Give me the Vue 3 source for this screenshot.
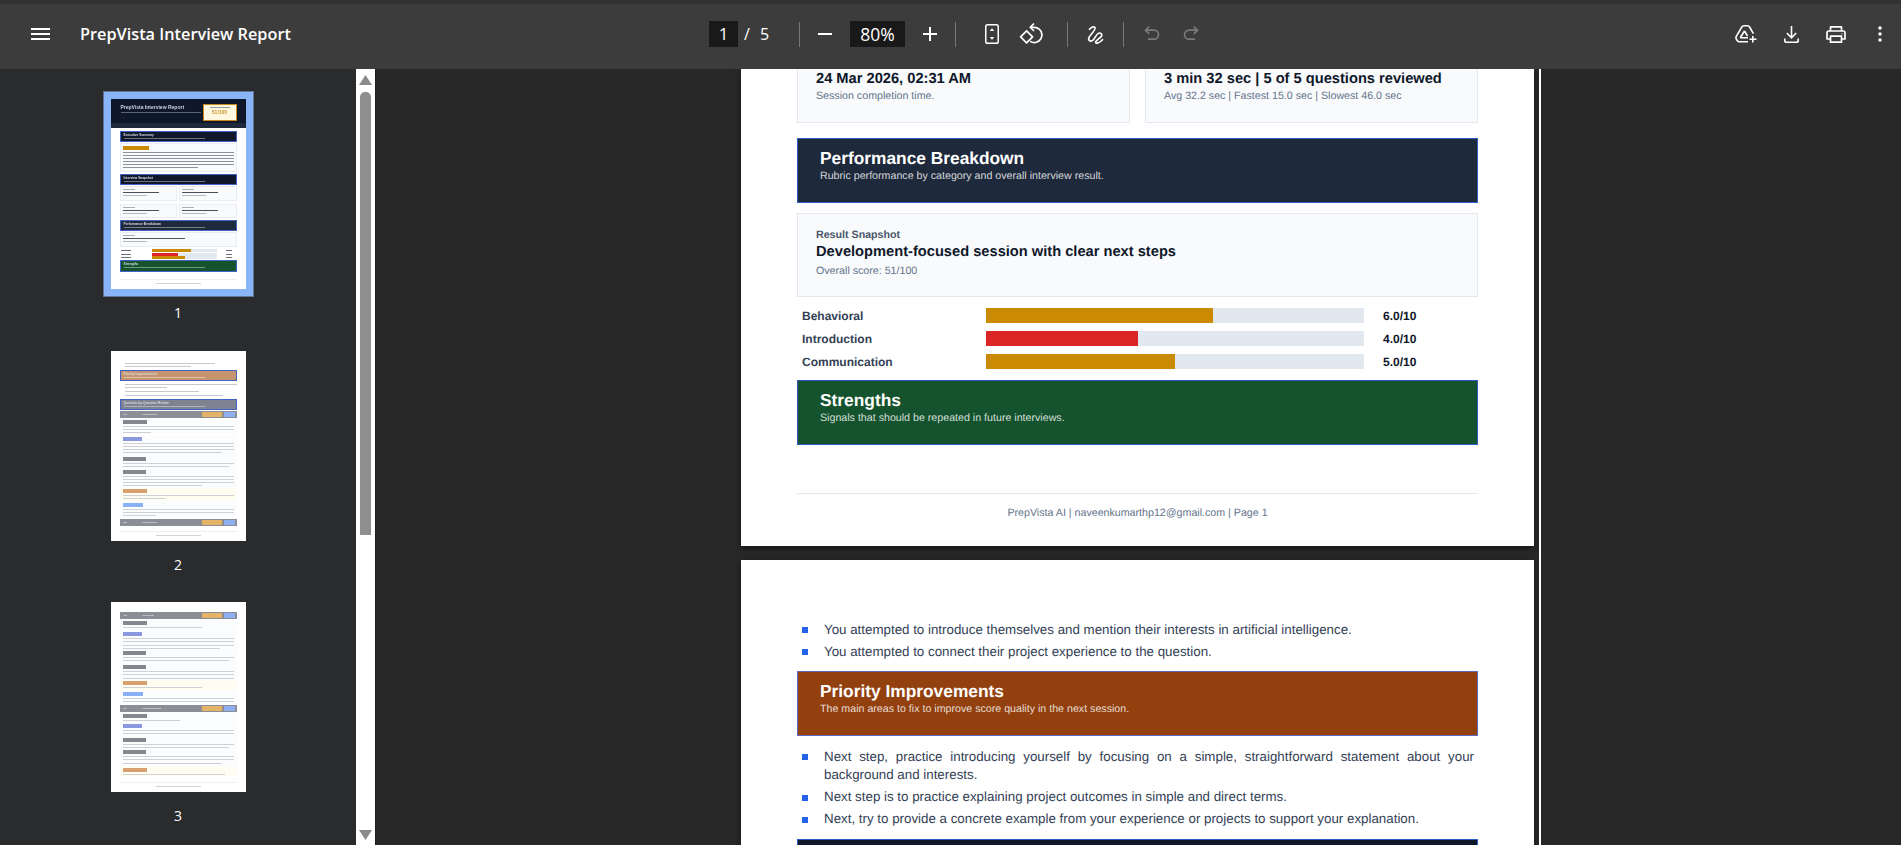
<script setup>
const bars = [
  { label: 'Behavioral', value: '6.0/10', pct: 60, color: '#ca8a04' },
  { label: 'Introduction', value: '4.0/10', pct: 40.2, color: '#dc2626' },
  { label: 'Communication', value: '5.0/10', pct: 50, color: '#ca8a04' },
]

// Thumbnail items are described by their top (y) and height in thumbnail pixels.
// Flow margins are derived from them so the miniature stays a normal stacked layout.
function flow(items) {
  let bottom = 0
  return items.map((it) => {
    const out = { ...it, mt: it.y - bottom }
    bottom = it.y + it.h
    return out
  })
}
const line = (y, w = 100, x = 9) => ({ kind: 'line', y, h: 1, w, x })
const banner = (y, h, text, bg, sub) => ({ kind: 'banner', y, h, text, bg, sub })
const qhead = (y, n, text) => ({ kind: 'qhead', y, h: 7, n, text })
const block = (y, h, tag, tagW, lines, bg = '#fbfcfe') => ({ kind: 'block', y, h, tag, tagW, lines, bg })
const GRAY = '#85878f', BLUE = '#8a98e0', SKY = '#8ab0f8', ORANGE = '#d8a070', CREAM = '#fffcf2'

const thumbs = [
  {
    n: 1,
    selected: true,
    items: flow([
      { kind: 'hero', y: 0, h: 29 },
      banner(32, 11, 'Executive Summary', '#0f172a', true),
      { kind: 'summary', y: 44, h: 29 },
      banner(75, 11, 'Interview Snapshot', '#0f172a', true),
      { kind: 'cards', y: 87, h: 15 },
      { kind: 'cards', y: 105, h: 14 },
      banner(121, 11, 'Performance Breakdown', '#1e293b', true),
      { kind: 'result', y: 133, h: 15 },
      { kind: 'mbar', y: 150, h: 3, c: '#ca8a04', w: 61 },
      { kind: 'mbar', y: 153.5, h: 3, c: '#dc2626', w: 41 },
      { kind: 'mbar', y: 157, h: 3, c: '#ca8a04', w: 51 },
      banner(161, 12, 'Strengths', '#14532d', true),
      { kind: 'foot', y: 180, h: 6 },
    ]),
  },
  {
    n: 2,
    items: flow([
      line(12, 90, 14), line(15, 66, 14),
      banner(19, 11, 'Priority Improvements', '#c6946f', true),
      line(33, 112, 14), line(36, 42, 14), line(40, 74, 14), line(44, 98, 14),
      banner(48, 11, 'Question-by-Question Review', '#7f8290', true),
      qhead(60, 'Q1', 'Introduction'),
      block(68, 15, GRAY, 24, [100, 100, 26]),
      block(85, 20, BLUE, 19, [100, 100, 100, 90]),
      block(105, 12, GRAY, 23, [100, 96]),
      block(118, 19, GRAY, 23, [100, 100, 100, 72]),
      block(137, 13, ORANGE, 24, [100, 38], CREAM),
      block(151, 16, SKY, 20, [100, 100, 30]),
      qhead(168, 'Q2', 'Introduction'),
      { kind: 'foot', y: 180, h: 6 },
    ]),
  },
  {
    n: 3,
    items: flow([
      qhead(10, 'Q3', 'Technical'),
      block(18, 10, GRAY, 24, [72]),
      block(29, 19, BLUE, 19, [100, 100, 100, 88]),
      block(48, 14, GRAY, 23, [100, 96]),
      block(62, 16, GRAY, 23, [100, 100, 100]),
      block(78, 10, ORANGE, 24, [72], CREAM),
      block(89, 13, SKY, 20, [100, 100]),
      qhead(103, 'Q4', 'Communication'),
      block(111, 9, GRAY, 24, [52]),
      block(121, 14, BLUE, 19, [100, 100]),
      block(135, 12, GRAY, 23, [100, 96]),
      block(147, 18, GRAY, 23, [100, 100, 90]),
      block(165, 9, ORANGE, 24, [92], CREAM),
      { kind: 'foot', y: 180, h: 6 },
    ]),
  },
]
</script>

<template>
  <div class="app">
    <header class="toolbar">
      <div class="tb-left">
        <svg class="ic menu" viewBox="0 0 19 12"><path d="M0 0h19v2H0zM0 5h19v2H0zM0 10h19v2H0z" fill="#fff" /></svg>
        <span class="doc-title">PrepVista Interview Report</span>
      </div>
      <div class="tb-center">
        <span class="page-box">1</span>
        <span class="slash">/</span>
        <span class="page-total">5</span>
        <i class="sep first" />
        <svg class="ic zoom-minus" viewBox="0 0 14 2"><path d="M0 0h14v2H0z" fill="#fff" /></svg>
        <span class="zoom-box">80%</span>
        <svg class="ic zoom-plus" viewBox="0 0 14 14"><path d="M6 0h2v6h6v2H8v6H6V8H0V6h6z" fill="#fff" /></svg>
        <i class="sep second" />
        <svg class="ic fit" viewBox="0 0 14 20" fill="none">
          <rect x=".75" y=".75" width="12.5" height="18.5" rx="1.8" stroke="#fff" stroke-width="1.5" />
          <path d="M7 4.2 9.3 7H4.7zM7 15.8 4.7 13h4.6z" fill="#fff" />
        </svg>
        <svg class="ic rotate" viewBox="0 0 24 24" fill="none" stroke="#fff" stroke-width="1.7">
          <path d="M7.6 8.8 13.6 14.8 7.6 20.8 1.6 14.8z" stroke-linejoin="round" />
          <path d="M11.8 5.3h3.4a7.6 7.6 0 0 1 2.2 14.9 7.4 7.4 0 0 1-6.2-.8" />
          <path d="M15 1.5 11.3 5.3 15 9" />
        </svg>
        <i class="sep third" />
        <svg class="ic draw" viewBox="0 0 20 22" fill="none" stroke="#fff" stroke-width="1.900" stroke-linecap="round" stroke-linejoin="round">
          <path d="M2.500 5C4 3 7 1.500 8.500 2.500c1.500 1.200-.5 4-2.500 6.500C4 11.500 1 14 1.500 16.500c.5 2.800 3.500 2.700 5.500.5 2-2.300 3.500-6.500 6-7.500 2-.8 4.500.8 3.500 3-1 2.300-7 5.500-7 7.500 0 2 4.500 1 8-3" />
        </svg>
        <i class="sep fourth" />
        <svg class="ic undo" viewBox="0 0 16 18" fill="none" stroke="#7a7a7a" stroke-width="1.7">
          <path d="M5.200 1.500 1.500 5.200 5.200 8.900" />
          <path d="M1.500 5.200H10a4.500 4.500 0 0 1 0 9H4" />
        </svg>
        <svg class="ic redo" viewBox="0 0 16 18" fill="none" stroke="#7a7a7a" stroke-width="1.7">
          <path d="M10.800 1.500 14.500 5.200 10.800 8.900" />
          <path d="M14.500 5.200H6a4.500 4.500 0 0 0 0 9H12" />
        </svg>
      </div>
      <div class="tb-right">
        <svg class="ic drive" viewBox="0 0 22 18" fill="none" stroke="#fff" stroke-width="1.6" stroke-linejoin="round">
          <path d="M13 16.800H4.600c-1 0-1.800-.4-2.400-1.300L1.300 14c-.5-.9-.5-1.700 0-2.600L6.800 2c.5-.8 1.200-1.200 2.200-1.200h3.400c1 0 1.700.4 2.200 1.200l3.800 6.600" />
          <path d="M5.200 12.800h7.800M9.500 6 5.200 12.800M9.500 6l3 5" />
          <path d="M17.800 11v6.500M14.500 14.300h7" />
        </svg>
        <svg class="ic download" viewBox="0 0 15 17" fill="none" stroke="#fff" stroke-width="1.6">
          <path d="M7.500 0v11.500M2.800 7l4.700 4.800L12.200 7" />
          <path d="M.8 12.500v1.900c0 1 .7 1.800 1.700 1.800h10c1 0 1.700-.8 1.700-1.800v-1.900" />
        </svg>
        <svg class="ic print" viewBox="0 0 20 17" fill="none" stroke="#fff" stroke-width="1.7" stroke-linejoin="round">
          <path d="M4.500 5V.9h11V5" />
          <path d="M4.500 13H1V7c0-1.100.9-2 2-2h14c1.100 0 2 .9 2 2v6h-3.500" />
          <path d="M4.500 10.200h11v6h-11z" />
          <circle cx="16" cy="7.800" r=".6" fill="#fff" stroke="none" />
        </svg>
        <svg class="ic more" viewBox="0 0 4 16"><g fill="#fff"><circle cx="2" cy="2" r="1.700" /><circle cx="2" cy="8" r="1.700" /><circle cx="2" cy="14" r="1.700" /></g></svg>
      </div>
    </header>

    <div class="body">
      <aside class="sidebar">
        <div v-for="t in thumbs" :key="t.n" class="thumb-item">
          <div class="thumb" :class="{ selected: t.selected }">
            <div class="thumb-inner">
              <template v-for="(it, i) in t.items" :key="i">
                <div v-if="it.kind === 'hero'" class="m-hero" :style="{ marginTop: it.mt + 'px', height: it.h + 'px' }">
                  <div class="m-hero-main">
                    <div class="m-hero-text">
                      <b>PrepVista Interview Report</b>
                      <i class="m-hero-sub" />
                    </div>
                    <div class="m-score"><i />51/100</div>
                  </div>
                </div>
                <div v-else-if="it.kind === 'banner'" class="m-banner" :style="{ marginTop: it.mt + 'px', height: it.h + 'px', background: it.bg }">
                  <span>{{ it.text }}</span><i v-if="it.sub" />
                </div>
                <div v-else-if="it.kind === 'line'" class="m-line" :style="{ marginTop: it.mt + 'px', marginLeft: it.x + 'px', width: it.w + 'px' }" />
                <div v-else-if="it.kind === 'qhead'" class="m-qhead" :style="{ marginTop: it.mt + 'px' }">
                  <span class="q-n">{{ it.n }}</span><span class="q-t">{{ it.text }}</span>
                  <i class="pill gold" /><i class="pill sky" />
                </div>
                <div v-else-if="it.kind === 'block'" class="m-block" :style="{ marginTop: it.mt + 'px', height: it.h + 'px', background: it.bg }">
                  <i class="m-tag" :style="{ width: it.tagW + 'px', background: it.tag }" />
                  <i v-for="(w, j) in it.lines" :key="j" class="m-bl" :style="{ width: w + '%' }" />
                </div>
                <div v-else-if="it.kind === 'summary'" class="m-summary" :style="{ marginTop: it.mt + 'px', height: it.h + 'px' }">
                  <i class="m-tag orange" />
                  <i v-for="j in 6" :key="j" class="m-dl" :class="{ short: j === 6 }" />
                </div>
                <div v-else-if="it.kind === 'cards'" class="m-cards" :style="{ marginTop: it.mt + 'px', height: it.h + 'px' }">
                  <div v-for="j in 2" :key="j" class="m-card"><i class="s1" /><i class="s2" /><i class="s3" /></div>
                </div>
                <div v-else-if="it.kind === 'result'" class="m-result" :style="{ marginTop: it.mt + 'px', height: it.h + 'px' }"><i class="s1" /><i class="s2" /><i class="s3" /></div>
                <div v-else-if="it.kind === 'mbar'" class="m-barrow" :style="{ marginTop: it.mt + 'px', height: it.h + 'px' }">
                  <i class="ml" /><div class="mt"><div :style="{ width: it.w + '%', background: it.c }" /></div><i class="mv" />
                </div>
                <div v-else-if="it.kind === 'foot'" class="m-foot" :style="{ marginTop: it.mt + 'px' }"><i /></div>
              </template>
            </div>
          </div>
          <div class="thumb-num">{{ t.n }}</div>
        </div>
      </aside>

      <div class="scrollbar">
        <svg class="arrow" viewBox="0 0 13 10"><path d="M6.500 0 13 10H0z" fill="#8a8a8a" /></svg>
        <div class="sb-thumb" />
        <svg class="arrow down" viewBox="0 0 13 10"><path d="M0 0h13L6.500 10z" fill="#8a8a8a" /></svg>
      </div>

      <main class="viewer">
        <div class="pages">
          <section class="page page-one">
            <div class="cards">
              <div class="card">
                <div class="card-title">24 Mar 2026, 02:31 AM</div>
                <div class="card-sub">Session completion time.</div>
              </div>
              <div class="card">
                <div class="card-title">3 min 32 sec | 5 of 5 questions reviewed</div>
                <div class="card-sub">Avg 32.2 sec | Fastest 15.0 sec | Slowest 46.0 sec</div>
              </div>
            </div>

            <div class="banner navy">
              <h2>Performance Breakdown</h2>
              <p>Rubric performance by category and overall interview result.</p>
            </div>

            <div class="snapshot">
              <div class="snap-label">Result Snapshot</div>
              <div class="snap-title">Development-focused session with clear next steps</div>
              <div class="snap-sub">Overall score: 51/100</div>
            </div>

            <div class="bars">
              <div v-for="b in bars" :key="b.label" class="bar-row">
                <span class="bar-label">{{ b.label }}</span>
                <div class="bar-track"><div class="bar-fill" :style="{ width: b.pct + '%', background: b.color }" /></div>
                <span class="bar-value">{{ b.value }}</span>
              </div>
            </div>

            <div class="banner green">
              <h2>Strengths</h2>
              <p>Signals that should be repeated in future interviews.</p>
            </div>

            <footer class="page-foot">PrepVista AI | naveenkumarthp12@gmail.com | Page 1</footer>
          </section>

          <section class="page page-two">
            <ul class="list">
              <li><span>You attempted to introduce themselves and mention their interests in artificial intelligence.</span></li>
              <li><span>You attempted to connect their project experience to the question.</span></li>
            </ul>
            <div class="banner brown">
              <h2>Priority Improvements</h2>
              <p>The main areas to fix to improve score quality in the next session.</p>
            </div>
            <ul class="list after">
              <li><span>Next step, practice introducing yourself by focusing on a simple, straightforward statement about your background and interests.</span></li>
              <li><span>Next step is to practice explaining project outcomes in simple and direct terms.</span></li>
              <li><span>Next, try to provide a concrete example from your experience or projects to support your explanation.</span></li>
            </ul>
            <div class="banner dark" />
          </section>
        </div>
      </main>
    </div>
  </div>
</template>

<style>
html, body { margin: 0; background: #282828; overflow: hidden; }
</style>

<style scoped>
.app { width: 1901px; height: 845px; display: flex; flex-direction: column; overflow: hidden; background: #282828; }
.ic { display: block; flex: none; }

/* toolbar */
.toolbar { height: 69px; box-sizing: border-box; padding-bottom: 5px; flex: none; display: flex; align-items: center; background: #3c3c3c; border-top: 4px solid #323232; color: #fff; font-family: "Open Sans", "Noto Sans", sans-serif; position: relative; z-index: 2; }
.tb-left { display: flex; align-items: center; width: 709px; flex: none; padding-left: 31px; box-sizing: border-box; }
.menu { width: 19px; height: 12px; }
.doc-title { margin-left: 30px; font-size: 16.300px; font-weight: 600; white-space: nowrap; }
.tb-center { display: flex; align-items: center; flex: none; font-size: 16px; }
.page-box { width: 29px; height: 26px; line-height: 26px; background: #191919; text-align: center; font-size: 17px; }
.slash { width: 8px; margin-left: 5px; text-align: center; }
.page-total { width: 8px; margin-left: 9px; text-align: center; }
.sep { display: block; width: 1px; height: 25px; background: #777; flex: none; }
.sep.first { margin-left: 31px; }
.zoom-minus { width: 14px; height: 2px; margin-left: 18px; }
.zoom-box { width: 55px; height: 26px; line-height: 26px; margin-left: 18px; background: #191919; text-align: center; font-size: 17.500px; }
.zoom-plus { width: 14px; height: 14px; margin-left: 18px; }
.sep.second { margin-left: 18px; }
.fit { width: 14px; height: 20px; margin-left: 29px; }
.rotate { width: 24px; height: 24px; margin-left: 20px; }
.sep.third { margin-left: 24px; }
.draw { width: 18px; height: 19px; margin-left: 19px; }
.sep.fourth { margin-left: 18px; }
.undo { width: 16px; height: 18px; margin-left: 20px; }
.redo { width: 16px; height: 18px; margin-left: 23px; }
.tb-right { margin-left: auto; display: flex; align-items: center; padding-right: 19px; }
.drive { width: 22px; height: 18px; }
.download { width: 15px; height: 17px; margin-left: 27px; }
.print { width: 20px; height: 17px; margin-left: 27px; }
.more { width: 4px; height: 16px; margin-left: 32px; }

/* body */
.body { flex: 1; min-height: 0; display: flex; }
.sidebar { width: 356px; flex: none; background: #2a2b2c; display: flex; flex-direction: column; align-items: center; padding-top: 30px; overflow: hidden; box-sizing: border-box; font-family: "Liberation Sans", sans-serif; }
.thumb-item { height: 251.500px; flex: none; display: flex; flex-direction: column; align-items: center; }
.thumb { width: 135px; height: 190px; flex: none; background: #fff; overflow: hidden; }
.thumb-inner { height: 190px; display: flow-root; filter: blur(.45px); }
.thumb.selected { box-shadow: 0 0 0 7px #8ab4f8, 0 0 0 8px #5f7396; }
.thumb-num { margin-top: 14px; font: 14px/20px "Open Sans", sans-serif; color: #fff; }

/* miniatures */
.m-hero { background: #1e293b; display: flow-root; }
.m-hero-main { height: 24px; background: #0f172a; display: flex; justify-content: space-between; align-items: flex-start; padding: 5px 9px 0 10px; box-sizing: border-box; }
.m-hero-text b { display: block; font-size: 5px; line-height: 6px; color: #cbd2dc; white-space: nowrap; }
.m-hero-sub { display: block; width: 80px; height: 1px; margin-top: 2px; background: #5a6577; }
.m-score { width: 34px; height: 17px; box-sizing: border-box; border: 1px solid #c9891a; background: #fff8e1; text-align: center; color: #c9952a; font-size: 5px; font-weight: 700; line-height: 6px; }
.m-score i { display: block; width: 20px; height: 1px; margin: 2px auto 1px; background: #999; }
.m-banner { margin-left: 9px; margin-right: 9px; box-sizing: border-box; border: 1px solid #4263c4; padding: 1px 3px; overflow: hidden; color: #d8dce3; }
.m-banner span { display: block; font-size: 3.200px; line-height: 4px; font-weight: 700; white-space: nowrap; }
.m-banner i { display: block; width: 75%; height: 1px; margin-top: 1px; background: rgba(255, 255, 255, .4); }
.m-line { height: 1px; background: #c8c9cc; }
.m-qhead { height: 7px; margin-left: 9px; margin-right: 9px; display: flex; align-items: center; background: #8b8d97; color: #e6e6ea; font-size: 2.500px; font-weight: 700; }
.q-n { margin-left: 4px; width: 16px; }
.q-t { flex: 1; margin-left: 3px; }
.pill { display: block; height: 5px; }
.pill.gold { width: 20px; background: #e3b368; }
.pill.sky { width: 11px; margin: 0 2px; background: #8fb0f0; }
.m-block { margin-left: 9px; margin-right: 9px; padding: 1px 3px 0; box-sizing: border-box; overflow: hidden; }
.m-tag { display: block; height: 4px; }
.m-tag.orange { width: 26px; background: #ca8a04; }
.m-bl { display: block; height: 1px; margin-top: 2.200px; background: #cfd0d3; }
.m-summary { margin-left: 9px; margin-right: 9px; padding: 2px 2px 0; box-sizing: border-box; background: #f8fafc; border: 1px solid #e8edf3; }
.m-dl { display: block; height: 1px; margin-top: 2px; background: #8c909a; }
.m-tag.orange + .m-dl { margin-top: 1.500px; }
.m-dl.short { width: 68%; }
.m-cards { margin-left: 9px; margin-right: 9px; display: flex; gap: 2px; }
.m-card, .m-result { flex: 1; box-sizing: border-box; background: #f8fafc; border: 1px solid #e8edf3; padding: 2px 2px 0; }
.m-result { margin-left: 9px; margin-right: 9px; }
.s1, .s2, .s3 { display: block; height: 1px; }
.s1 { width: 12px; background: #a8adb6; }
.s2 { width: 36px; margin-top: 2px; background: #4a4f59; }
.s3 { width: 24px; margin-top: 2px; background: #b6bac2; }
.m-result .s2 { width: 62px; }
.m-barrow { margin-left: 9px; margin-right: 9px; display: flex; align-items: center; }
.ml { display: block; width: 10px; height: 1px; margin-left: 1px; background: #6a6f7a; }
.mt { width: 65px; height: 3px; margin-left: 21px; background: #e2e8f0; }
.mt div { height: 3px; }
.mv { display: block; width: 6px; height: 1px; margin-left: 9px; background: #6a6f7a; }
.m-foot { height: 6px; margin-left: 9px; margin-right: 9px; border-top: 1px solid #eef0f4; box-sizing: border-box; }
.m-foot i { display: block; width: 45px; height: 1px; margin: 3px auto 0; background: #d0d2d6; }

/* fake scrollbar */
.scrollbar { width: 19px; flex: none; background: #fff; border-right: 1px solid #1f1f1f; display: flex; flex-direction: column; align-items: center; padding-top: 6px; box-sizing: content-box; }
.arrow { width: 13px; height: 10px; flex: none; }
.sb-thumb { width: 11px; height: 443px; margin-top: 7px; border-radius: 5px 5px 0 0; background: #8f8f8f; }
.arrow.down { margin-top: auto; margin-bottom: 5px; }

/* viewer */
.viewer { flex: 1; min-width: 0; display: flex; justify-content: center; padding-right: 2px; overflow: hidden; background: #282828; font-family: "Liberation Sans", Arial, sans-serif; text-rendering: geometricPrecision; }
.pages { width: 793px; position: relative; }
.pages::after { content: ""; position: absolute; top: 0; bottom: -100px; left: calc(100% + 5px); width: 2px; background: #fff; }
.page { background: #fff; box-sizing: border-box; padding: 0 56px; box-shadow: 0 2px 6px rgba(0, 0, 0, .5); }
.page-one { height: 477px; }
.page-two { height: 400px; margin-top: 14px; padding-top: 60.700px; }

.cards { display: flex; gap: 15px; }
.card { flex: 1; height: 54px; box-sizing: border-box; padding: 1px 18px 0; background: #f8fafc; border: 1px solid #e2e8f0; border-top: 0; }
.card-title { font-size: 14.670px; line-height: 18px; font-weight: 700; color: #0f172a; white-space: nowrap; }
.card-sub { font-size: 10.670px; line-height: 14px; margin-top: 1px; color: #64748b; }

.banner { height: 65px; box-sizing: border-box; padding: 9px 22px 0; margin-top: 15px; border: 1px solid #2f5bc9; color: #fff; }
.banner h2 { margin: 0; font-size: 17.330px; line-height: 21px; font-weight: 700; }
.banner p { margin: 0; font-size: 10.670px; line-height: 14px; color: rgba(255, 255, 255, .82); }
.navy { background: #1e293b; }
.green { background: #14532d; margin-top: 11px; }
.brown { background: #92400e; margin-top: 9.700px; border-color: #5c6bc0; }
.dark { background: #0f172a; margin-top: 9.700px; }

.snapshot { height: 84px; margin-top: 10px; box-sizing: border-box; padding: 14px 18px 0; background: #f8fafc; border: 1px solid #e2e8f0; }
.snap-label { font-size: 10.670px; line-height: 14px; font-weight: 700; color: #475569; }
.snap-title { font-size: 14.670px; line-height: 20px; font-weight: 700; color: #0f172a; }
.snap-sub { font-size: 10.670px; line-height: 14px; margin-top: 2px; color: #64748b; }

.bars { margin-top: 11px; display: flex; flex-direction: column; gap: 8px; }
.bar-row { display: flex; align-items: center; height: 15px; padding-left: 5px; }
.bar-label { width: 184px; flex: none; font-size: 12px; font-weight: 700; color: #334155; }
.bar-track { width: 378px; height: 15px; flex: none; background: #e2e8f0; }
.bar-fill { height: 100%; }
.bar-value { margin-left: 19px; font-size: 12px; font-weight: 700; color: #0f172a; }

.page-foot { margin-top: 47.500px; padding-top: 12px; border-top: 1px solid #e2e8f0; text-align: center; font-size: 10.670px; line-height: 14px; color: #64748b; }

.list { list-style: none; margin: 0; padding: 0 4px 0 5px; font-size: 13.330px; line-height: 18.670px; color: #334155; }
.list.after { margin-top: 11.700px; }
.list li { display: flex; gap: 16px; text-align: justify; }
.list li + li { margin-top: 3.330px; }
.list li::before { content: ""; width: 6px; height: 6px; flex: none; margin-top: 6.300px; background: #2563eb; }
.list li span { flex: 1; }
</style>
